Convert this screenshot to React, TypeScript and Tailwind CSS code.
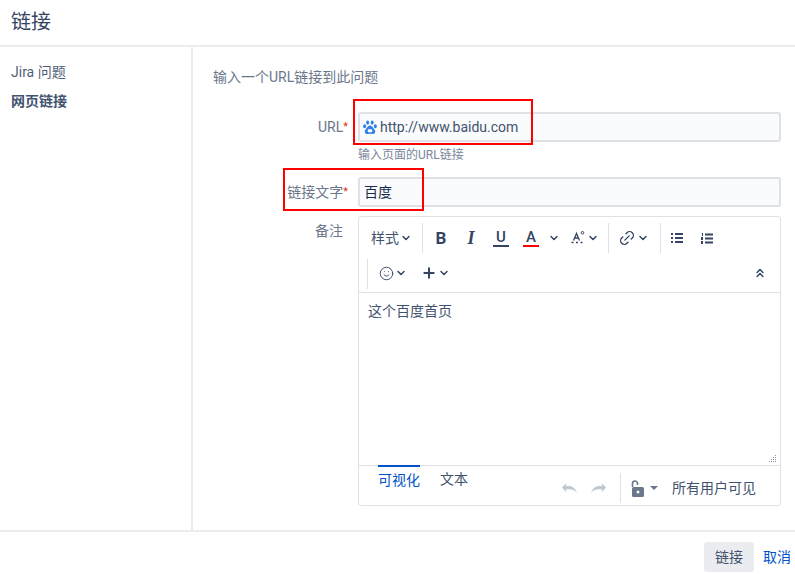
import { ChevronDown, Smile, Plus, Link2, ChevronsUp } from 'lucide-react'

const font = '[font-family:"Roboto","Noto_Sans_CJK_SC",sans-serif]'

function BaiduIcon() {
  return (
    <svg width="14" height="15" viewBox="0 0 14 15" fill="#2f7fe8" className="shrink-0">
      <ellipse cx="4.6" cy="2.6" rx="1.5" ry="2.1" />
      <ellipse cx="9.2" cy="2.6" rx="1.5" ry="2.1" />
      <ellipse cx="1.6" cy="6.2" rx="1.5" ry="2" />
      <ellipse cx="12.3" cy="6.2" rx="1.5" ry="2" />
      <path d="M7 5.6c-1.7 0-2.4 1.6-3.6 2.8C2.200 9.600 1.500 10.700 1.900 12.200c.4 1.500 1.700 2 3 1.800.8-.1 1.400-.3 2.100-.3s1.300.2 2.100.3c1.300.2 2.600-.3 3-1.800.4-1.500-.3-2.600-1.500-3.800C9.400 7.200 8.700 5.600 7 5.600z" />
      <rect x="4.700" y="9.300" width="4.600" height="3" rx="1.200" fill="#fff" />
    </svg>
  )
}

function Bullets() {
  return (
    <svg width="12" height="10" viewBox="0 0 12 10" fill="#344563">
      <rect x="0" y="0" width="2" height="2" />
      <rect x="0" y="4" width="2" height="2" />
      <rect x="0" y="8" width="2" height="2" />
      <rect x="4" y="0" width="8" height="2" />
      <rect x="4" y="4" width="8" height="2" />
      <rect x="4" y="8" width="8" height="2" />
    </svg>
  )
}

function Numbers() {
  return (
    <svg width="12" height="11" viewBox="0 0 12 11" fill="#344563">
      <rect x="1" y="0" width="1" height="3" />
      <rect x="0" y="4" width="2" height="3" />
      <rect x="0" y="8" width="2" height="3" />
      <rect x="4" y="0.500" width="8" height="2" />
      <rect x="4" y="4.500" width="8" height="2" />
      <rect x="4" y="8.500" width="8" height="2" />
    </svg>
  )
}

function ClearFormat() {
  return (
    <svg width="16" height="16" viewBox="0 0 16 16" fill="none" stroke="#344563" strokeWidth="1.300">
      <path d="M2.500 10.500 5.500 3.500 8.500 10.500M3.700 8h3.600" />
      <circle cx="11.500" cy="2.800" r="1.300" strokeWidth="1" />
      <path d="M0.500 12.500h2M5 12.500h2M9.500 12.500h2" />
    </svg>
  )
}

function UndoArrow({ flip = false }: { flip?: boolean }) {
  return (
    <svg width="15" height="10" viewBox="0 0 15 10" fill="#c1c7d0" className={flip ? '-scale-x-100' : ''}>
      <path d="M0 4.500 4 0.500v2.700C8.500 2.400 12.500 3.800 15 9.500 12.500 6.900 8.800 5.700 4 6.400V9z" />
    </svg>
  )
}

function OpenLock() {
  return (
    <svg width="13" height="17" viewBox="0 0 13 17" className="shrink-0">
      <path d="M1.500 7V3.500a2.500 2.500 0 0 1 5 0V5" fill="none" stroke="#6b778c" strokeWidth="1.600" />
      <rect x="1" y="7" width="12" height="10" rx="1.500" fill="#6b778c" />
      <circle cx="7" cy="12" r="1.500" fill="#fff" />
    </svg>
  )
}

function Chevron({ className = '' }: { className?: string }) {
  return <ChevronDown size={12} strokeWidth={3} className={`shrink-0 text-[#344563] ${className}`} />
}

function Sep() {
  return <div className="h-[30px] w-px bg-[#dfe1e6]" />
}

export default function App() {
  return (
    <div className={`relative flex h-[574px] w-[795px] flex-col overflow-hidden bg-white text-[14px] text-[#42526e] ${font}`}>
      <header className="flex h-[47px] shrink-0 items-center border-b-2 border-[#ebecf0] pb-px pl-[11px]">
        <h1 className="text-[20px] font-normal text-[#344563]">链接</h1>
      </header>

      <div className="flex min-h-0 flex-1">
        <nav className="w-[193px] shrink-0 border-r-2 border-[#ebecf0] pl-[11px] pt-[15px]">
          <div className="h-[29px] leading-5 text-[#505f79]">Jira 问题</div>
          <div className="font-bold leading-5 text-[#42526e]">网页链接</div>
        </nav>

        <main className="flex-1 pl-5 pr-[14px] pt-[20px]">
          <p className="mb-[25px] h-5 leading-5 text-[#6b778c]">输入一个URL链接到此问题</p>

          <div className="flex gap-[10px]">
            <label className="w-[135px] pt-[5px] text-right leading-5 text-[#6b778c]">
              URL<span className="relative -top-[2px] text-[11px] text-[#de350b]">*</span>
            </label>
            <div className="flex-1">
              <div className="flex h-[30px] items-center gap-[3px] rounded-[3px] border-2 border-[#dfe1e6] bg-[#fafbfc] pl-[3px] text-[#42526e]">
                <BaiduIcon />
                <span>http://www.baidu.com</span>
              </div>
              <div className="mt-[5px] text-[12px] leading-4 text-[#7a869a]">输入页面的URL链接</div>
            </div>
          </div>

          <div className="mt-[14px] flex gap-[10px]">
            <label className="w-[135px] pt-[5px] text-right leading-5 text-[#6b778c]">
              链接文字<span className="relative -top-[2px] text-[11px] text-[#de350b]">*</span>
            </label>
            <div className="flex h-[30px] flex-1 items-center rounded-[3px] border-2 border-[#dfe1e6] bg-[#fafbfc] pl-1 text-[#172b4d]">
              百度
            </div>
          </div>

          <div className="mt-[9px] flex gap-[10px]">
            <label className="w-[135px] pr-[5px] pt-[5px] text-right leading-5 text-[#6b778c]">备注</label>
            <div className="flex h-[290px] flex-1 flex-col rounded-[3px] border border-[#dfe1e6] text-[#344563]">
              <div className="h-[76px] shrink-0 border-b border-[#dfe1e6] pl-2">
                <div className="flex h-[40px] items-center pt-[2px]">
                  <span className="ml-1 flex w-[51px] items-center gap-px text-[#42526e]">
                    样式<Chevron />
                  </span>
                  <Sep />
                  <b className="ml-[9px] w-[18px] text-center text-[17px] font-bold leading-none">B</b>
                  <i className="ml-3 w-[18px] text-center font-['Liberation_Serif'] text-[18px] font-bold leading-none">I</i>
                  <span className="ml-[13px] w-[16px] border-b-2 border-[#344563] text-center text-[15px] font-medium leading-[15px]">U</span>
                  <span className="ml-[14px] w-[16px] border-b-2 border-[#ff0000] text-center text-[15px] font-medium leading-[15px]">A</span>
                  <Chevron className="ml-[9px]" />
                  <span className="ml-[11px]"><ClearFormat /></span>
                  <Chevron />
                  <span className="ml-[9px]"><Sep /></span>
                  <Link2 size={18} strokeWidth={1.800} className="ml-[9px] -rotate-45" />
                  <Chevron className="ml-[1px]" />
                  <span className="ml-[11px]"><Sep /></span>
                  <span className="ml-[10px]"><Bullets /></span>
                  <span className="ml-[18px]"><Numbers /></span>
                </div>
                <div className="flex h-[32px] items-center pt-[2px]">
                  <Sep />
                  <Smile size={15} strokeWidth={1.500} className="ml-[11px] -mt-[2px]" />
                  <Chevron className="ml-[1px] -mt-[2px]" />
                  <Plus size={16} strokeWidth={3} className="ml-[14px] -mt-[2px]" />
                  <Chevron className="ml-[1px] -mt-[2px]" />
                  <ChevronsUp size={14} strokeWidth={2.500} className="ml-auto mr-[13px] -mt-[2px]" />
                </div>
              </div>

              <div className="relative flex-1 px-[9px] pt-[8px] leading-5 text-[#42526e]">
                这个百度首页
                <svg width="10" height="8" viewBox="0 0 10 8" fill="#8993a4" className="absolute bottom-[2px] right-[3px]">
                  <rect x="8" y="0" width="1" height="1" />
                  <rect x="6" y="2" width="1" height="1" />
                  <rect x="8" y="2" width="1" height="1" />
                  <rect x="4" y="4" width="1" height="1" />
                  <rect x="6" y="4" width="1" height="1" />
                  <rect x="8" y="4" width="1" height="1" />
                  <rect x="2" y="6" width="1" height="1" />
                  <rect x="4" y="6" width="1" height="1" />
                  <rect x="6" y="6" width="1" height="1" />
                  <rect x="8" y="6" width="1" height="1" />
                </svg>
              </div>

              <div className="flex h-[40px] shrink-0 border-t border-[#dfe1e6] pl-[19px]">
                <span className="-mt-px h-[26px] border-t-2 border-[#0052cc] leading-[26px] text-[#0052cc]">可视化</span>
                <span className="ml-5 leading-[26px] text-[#42526e]">文本</span>
                <div className="ml-auto flex h-[32px] items-center self-end pb-[2px] pr-6">
                  <UndoArrow />
                  <span className="ml-[14px]"><UndoArrow flip /></span>
                  <div className="ml-[14px] h-[30px] w-px bg-[#dfe1e6]" />
                  <span className="ml-[10px]"><OpenLock /></span>
                  <span className="ml-[6px] h-0 w-0 border-x-[4px] border-t-[4px] border-x-transparent border-t-[#6b778c]" />
                  <span className="ml-[14px] text-[#42526e]">所有用户可见</span>
                </div>
              </div>
            </div>
          </div>
        </main>
      </div>

      <footer className="flex h-[44px] shrink-0 items-start justify-end border-t-2 border-[#ebecf0] pr-[4px] pt-[10px]">
        <button className="h-[30px] w-[50px] rounded-[3px] bg-[#ebecf0] text-[#42526e]">链接</button>
        <button className="ml-[9px] h-[30px] text-[#0052cc]">取消</button>
      </footer>

      <div className="absolute left-[353px] top-[99px] h-[46px] w-[180px] border-2 border-[#ff0000]" />
      <div className="absolute left-[283px] top-[168px] h-[43px] w-[141px] border-2 border-[#ff0000]" />
    </div>
  )
}
